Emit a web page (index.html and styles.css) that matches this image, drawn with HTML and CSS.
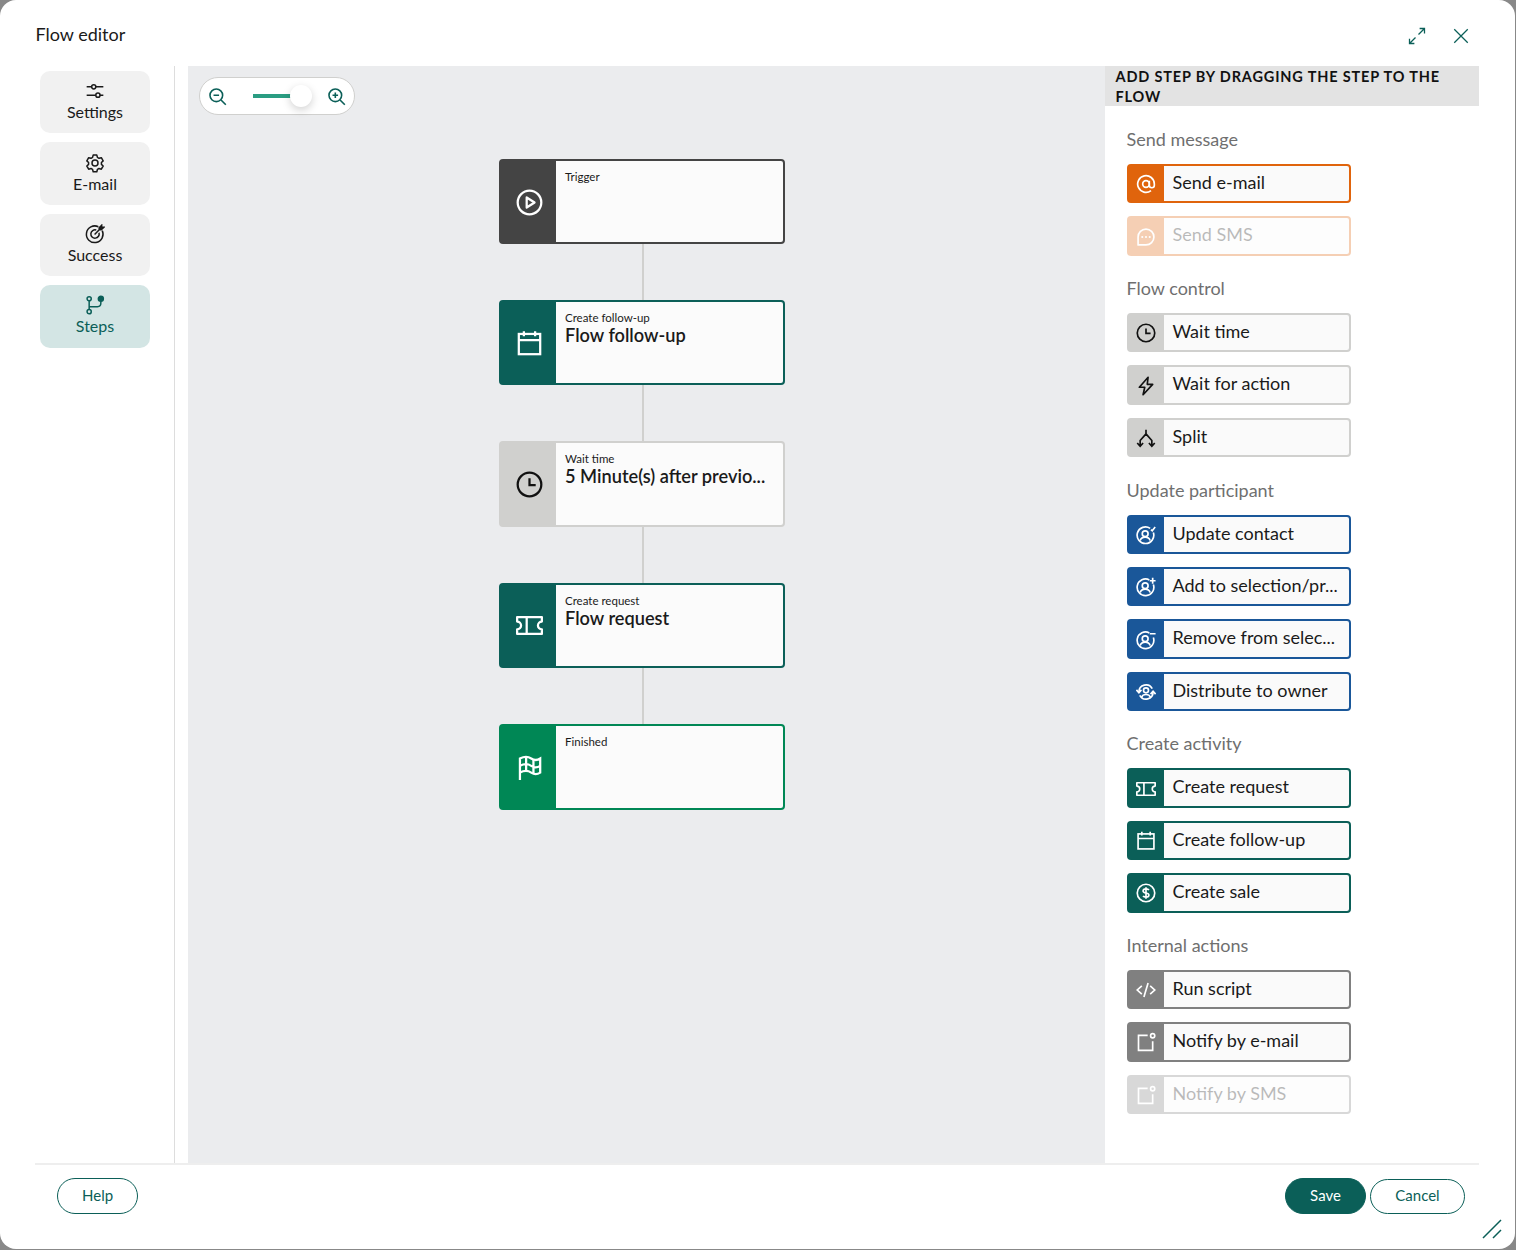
FILE: index.html
```html
<!DOCTYPE html>
<html lang="en">
<head>
  <meta charset="UTF-8" />
  <meta name="viewport" content="width=device-width, initial-scale=1.0"/>
  <title>Flow editor</title>
  <link rel="stylesheet" href="styles.css">
</head>
<body>
  <!-- icon sprite -->
  <svg class="sprite" xmlns="http://www.w3.org/2000/svg">
    <symbol id="i-sliders" viewBox="0 0 24 24"><path d="M2 7h6M13 7h9M2 17h11M18 17h4"/><circle cx="10.5" cy="7" r="2.5"/><circle cx="15.500" cy="17" r="2.500"/></symbol>
    <symbol id="i-gear" viewBox="0 0 24 24"><circle cx="12" cy="12" r="3.600"/><path d="M9.800 2.500h4.400l.7 2.800 1.900 1.100 2.800-.8 2.200 3.800-2.100 2v2.200l2.100 2-2.200 3.800-2.800-.8-1.900 1.100-.7 2.800H9.800l-.7-2.800-1.900-1.100-2.800.8-2.200-3.800 2.100-2v-2.200l-2.100-2 2.200-3.800 2.800.8 1.900-1.100z" stroke-linejoin="round"/></symbol>
    <symbol id="i-target" viewBox="0 0 24 24"><path d="M16 3.300A10 10 0 1 0 20.700 8"/><path d="M13.500 7.200A5 5 0 1 0 16.800 10.500"/><path d="M11.500 12.500 20 4M17 4.500V7h2.500L22.500 4H20V1.500z"/></symbol>
    <symbol id="i-branch" viewBox="0 0 24 24"><circle cx="5" cy="4.500" r="2.500"/><circle cx="5" cy="20" r="2.500"/><circle class="dot" cx="19" cy="4.500" r="3"/><path d="M5 7v10.500M5 14h10a4 4 0 0 0 4-4V7"/></symbol>
    <symbol id="i-zoom-out" viewBox="0 0 24 24"><circle cx="10.500" cy="10.500" r="8"/><path d="M16.500 16.500 22.500 22.500M7 10.500h7"/></symbol>
    <symbol id="i-zoom-in" viewBox="0 0 24 24"><circle cx="10.500" cy="10.500" r="8"/><path d="M16.500 16.500 22.500 22.500M7 10.500h7M10.500 7v7"/></symbol>
    <symbol id="i-play" viewBox="0 0 24 24"><circle cx="12" cy="12" r="10.500"/><path d="M9.500 7.500 16.500 12l-7 4.500z" stroke-linejoin="round"/></symbol>
    <symbol id="i-calendar" viewBox="0 0 24 24"><rect x="2.500" y="3.500" width="19" height="18"/><path d="M2.500 9h19M7 1V5.500M17 1V5.500"/></symbol>
    <symbol id="i-clock" viewBox="0 0 24 24"><circle cx="12" cy="12" r="10.500"/><path d="M12 6.500V12.500H17.500"/></symbol>
    <symbol id="i-ticket" viewBox="0 0 24 24"><path d="M1 4.500h22v4a3.500 3.500 0 0 0 0 7v4H1v-4a3.500 3.500 0 0 0 0-7zM9.500 4.500v15" stroke-linejoin="round"/></symbol>
    <symbol id="i-flag" viewBox="0 0 24 24"><path d="M3.500 23V4c4-2 7-2 10 0s5 2 8 0v12.500c-3 2-5 2-8 0s-6-2-10 0"/><path d="M9 2.800V15.200M15.500 4.800V17.300M3.500 10.500c4-2 7-2 10 0s5 2 8 0"/></symbol>
    <symbol id="i-at" viewBox="0 0 24 24"><circle cx="12" cy="12" r="4"/><path d="M16 8v5.500a3 3 0 0 0 6 0V12a10 10 0 1 0-4 8"/></symbol>
    <symbol id="i-chat" viewBox="0 0 24 24"><path d="M12 2.500a9.500 9.500 0 0 1 0 19H2.500V12A9.500 9.500 0 0 1 12 2.500z" stroke-linejoin="round"/><path d="M7.500 12h.01M12 12h.01M16.500 12h.01" stroke-linecap="round" stroke-width="2.500"/></symbol>
    <symbol id="i-bolt" viewBox="0 0 24 24"><path d="M14.500 1.500 4 13.500h6.500L8.500 22.500 20 10h-6.500z" stroke-linejoin="round"/></symbol>
    <symbol id="i-split" viewBox="0 0 24 24"><path d="M12 2v5M12 7 5 15v6M12 7l7 8v6M1.500 18 5 22l3.500-4M15.500 18l3.500 4 3.500-4"/></symbol>
    <symbol id="i-user-check" viewBox="0 0 24 24"><path d="M17 4A10 10 0 1 0 20.800 9"/><circle cx="11" cy="10.500" r="3.500"/><path d="M5 18.500c1-3 3.500-4 6-4s5 1 6 4M18 5.500 19.500 7 23 2.500"/></symbol>
    <symbol id="i-user-plus" viewBox="0 0 24 24"><path d="M16 3.500A10 10 0 1 0 20.800 9"/><circle cx="11" cy="10.500" r="3.500"/><path d="M5 18.500c1-3 3.500-4 6-4s5 1 6 4M20 1v7M16.500 4.500h7"/></symbol>
    <symbol id="i-user-minus" viewBox="0 0 24 24"><path d="M16 3.500A10 10 0 1 0 20.800 9"/><circle cx="11" cy="10.500" r="3.500"/><path d="M5 18.500c1-3 3.500-4 6-4s5 1 6 4M16.500 4.500h7"/></symbol>
    <symbol id="i-user-sync" viewBox="0 0 24 24"><path d="M3.500 12a8.500 8.500 0 0 1 16-4M20.500 12a8.500 8.500 0 0 1-16 4"/><circle cx="12" cy="10" r="3"/><path d="M6.500 18.500c1-2.500 3-3.500 5.500-3.500s4.500 1 5.500 3.500M.5 9.500l3 3.500 3-3.500M17.500 14.500l3-3.500 3 3.500"/></symbol>
    <symbol id="i-coin" viewBox="0 0 24 24"><circle cx="12" cy="12" r="10.500"/><path d="M15.500 8.500c-.5-1-1.800-1.500-3.500-1.500-2 0-3.500 1-3.500 2.500 0 3.500 7 1.500 7 5 0 1.500-1.500 2.500-3.500 2.500-1.700 0-3-.5-3.500-1.500M12 5v14"/></symbol>
    <symbol id="i-code" viewBox="0 0 24 24"><path d="M7 7 1.500 12 7 17M17 7l5.500 5-5.500 5M14.500 3.500 9.500 20.500"/></symbol>
    <symbol id="i-notify" viewBox="0 0 24 24"><path d="M14 4H3v18h17V11"/><circle cx="20" cy="4.500" r="2.500"/></symbol>
    <symbol id="i-expand" viewBox="0 0 24 24"><path d="M14 10 22 2M15.500 2H22V8.500M10 14 2 22M2 15.500V22H8.500"/></symbol>
    <symbol id="i-close" viewBox="0 0 24 24"><path d="M3 3 21 21M21 3 3 21"/></symbol>
  </svg>

  <div class="dialog">
    <header class="dialog-head">
      <h1 class="dialog-title">Flow editor</h1>
      <div class="head-actions">
        <svg class="icon head-icon"><use href="#i-expand"/></svg>
        <svg class="icon head-icon"><use href="#i-close"/></svg>
      </div>
    </header>

    <div class="dialog-body">
      <nav class="sidenav">
        <a class="nav-item"><svg class="icon"><use href="#i-sliders"/></svg>Settings</a>
        <a class="nav-item"><svg class="icon"><use href="#i-gear"/></svg>E-mail</a>
        <a class="nav-item"><svg class="icon"><use href="#i-target"/></svg>Success</a>
        <a class="nav-item active"><svg class="icon"><use href="#i-branch"/></svg>Steps</a>
      </nav>

      <main class="canvas">
        <div class="zoom-bar">
          <svg class="icon zoom-icon"><use href="#i-zoom-out"/></svg>
          <div class="zoom-track"><span class="zoom-fill"></span><span class="zoom-thumb"></span></div>
          <svg class="icon zoom-icon zoom-last"><use href="#i-zoom-in"/></svg>
        </div>

        <div class="flow">
          <div class="node dark">
            <div class="node-icon"><svg class="icon"><use href="#i-play"/></svg></div>
            <div class="node-text"><span class="node-label">Trigger</span></div>
          </div>
          <div class="connector"></div>
          <div class="node teal">
            <div class="node-icon"><svg class="icon"><use href="#i-calendar"/></svg></div>
            <div class="node-text"><span class="node-label">Create follow-up</span><span class="node-title">Flow follow-up</span></div>
          </div>
          <div class="connector"></div>
          <div class="node grey">
            <div class="node-icon"><svg class="icon"><use href="#i-clock"/></svg></div>
            <div class="node-text"><span class="node-label">Wait time</span><span class="node-title">5 Minute(s) after previo...</span></div>
          </div>
          <div class="connector"></div>
          <div class="node teal">
            <div class="node-icon"><svg class="icon"><use href="#i-ticket"/></svg></div>
            <div class="node-text"><span class="node-label">Create request</span><span class="node-title">Flow request</span></div>
          </div>
          <div class="connector"></div>
          <div class="node green">
            <div class="node-icon"><svg class="icon"><use href="#i-flag"/></svg></div>
            <div class="node-text"><span class="node-label">Finished</span></div>
          </div>
        </div>
      </main>

      <aside class="palette">
        <h2 class="palette-head">Add step by dragging the step to the flow</h2>
        <div class="palette-list">
          <section class="group">
            <h3 class="group-title">Send message</h3>
            <div class="step orange"><span class="step-icon"><svg class="icon"><use href="#i-at"/></svg></span><span class="step-name">Send e-mail</span></div>
            <div class="step orange disabled"><span class="step-icon"><svg class="icon"><use href="#i-chat"/></svg></span><span class="step-name">Send SMS</span></div>
          </section>
          <section class="group">
            <h3 class="group-title">Flow control</h3>
            <div class="step grey"><span class="step-icon"><svg class="icon"><use href="#i-clock"/></svg></span><span class="step-name">Wait time</span></div>
            <div class="step grey"><span class="step-icon"><svg class="icon"><use href="#i-bolt"/></svg></span><span class="step-name">Wait for action</span></div>
            <div class="step grey"><span class="step-icon"><svg class="icon"><use href="#i-split"/></svg></span><span class="step-name">Split</span></div>
          </section>
          <section class="group">
            <h3 class="group-title">Update participant</h3>
            <div class="step blue"><span class="step-icon"><svg class="icon"><use href="#i-user-check"/></svg></span><span class="step-name">Update contact</span></div>
            <div class="step blue"><span class="step-icon"><svg class="icon"><use href="#i-user-plus"/></svg></span><span class="step-name">Add to selection/pr...</span></div>
            <div class="step blue"><span class="step-icon"><svg class="icon"><use href="#i-user-minus"/></svg></span><span class="step-name">Remove from selec...</span></div>
            <div class="step blue"><span class="step-icon"><svg class="icon"><use href="#i-user-sync"/></svg></span><span class="step-name">Distribute to owner</span></div>
          </section>
          <section class="group">
            <h3 class="group-title">Create activity</h3>
            <div class="step teal"><span class="step-icon"><svg class="icon"><use href="#i-ticket"/></svg></span><span class="step-name">Create request</span></div>
            <div class="step teal"><span class="step-icon"><svg class="icon"><use href="#i-calendar"/></svg></span><span class="step-name">Create follow-up</span></div>
            <div class="step teal"><span class="step-icon"><svg class="icon"><use href="#i-coin"/></svg></span><span class="step-name">Create sale</span></div>
          </section>
          <section class="group">
            <h3 class="group-title">Internal actions</h3>
            <div class="step slate"><span class="step-icon"><svg class="icon"><use href="#i-code"/></svg></span><span class="step-name">Run script</span></div>
            <div class="step slate"><span class="step-icon"><svg class="icon"><use href="#i-notify"/></svg></span><span class="step-name">Notify by e-mail</span></div>
            <div class="step slate disabled"><span class="step-icon"><svg class="icon"><use href="#i-notify"/></svg></span><span class="step-name">Notify by SMS</span></div>
          </section>
        </div>
      </aside>
    </div>

    <footer class="dialog-foot">
      <button class="btn">Help</button>
      <div class="foot-right">
        <button class="btn primary">Save</button>
        <button class="btn cancel">Cancel</button>
      </div>
      <svg class="resize-handle" viewBox="0 0 20 20"><path d="M1 19 19 1M11 19 19 11"/></svg>
    </footer>
  </div>
</body>
</html>
```

FILE: styles.css
```css
* { box-sizing: border-box; }
html, body { margin: 0; height: 100%; }
body { background: #888; font-family: "Lato", "Liberation Sans", sans-serif; color: #1a1a1a; overflow: hidden; }
.sprite { display: none; }
.icon { width: 20px; height: 20px; fill: none; stroke: currentColor; stroke-width: 2; display: block; flex: none; }
.icon .dot, .dot { fill: currentColor; }

.dialog { width: 1515px; height: 1249px; background: #fff; border-radius: 16px; display: flex; flex-direction: column; position: relative; }

.dialog-head { height: 66px; flex: none; display: flex; align-items: center; justify-content: space-between; padding: 6px 45px 0 35.500px; }
.dialog-title { font-size: 18px; font-weight: 400; margin: 0 0 4px; }
.head-actions { display: flex; gap: 26px; color: #0b5f58; }
.head-icon { width: 18px; height: 18px; stroke-width: 1.700; }

.dialog-body { flex: 1; min-height: 0; display: flex; padding-right: 36px; }

.sidenav { width: 175px; flex: none; border-right: 1px solid #ddd; padding: 5px 24px 0 40px; display: flex; flex-direction: column; gap: 9px; }
.nav-item { height: 62.400px; background: #f1f1f1; border-radius: 10px; display: flex; flex-direction: column; align-items: center; padding-top: 10.300px; font-size: 16px; line-height: 22px; }
.nav-item .icon { stroke-width: 1.800; height: 20px; }
.nav-item.active { background: #d3e5e4; color: #0b5f58; }

.canvas { flex: 1; min-width: 0; margin-left: 13px; background: #ebecee; position: relative; }
.zoom-bar { position: absolute; left: 11px; top: 11px; width: 156px; height: 38px; background: #fff; border: 1px solid #d0d0ce; border-radius: 19px; display: flex; align-items: center; padding: 0 8px 0 8px; }
.zoom-icon { color: #0b5f58; stroke-width: 2; width: 19px; height: 19px; }
.zoom-last { margin-left: auto; }
.zoom-track { width: 59px; height: 4px; margin-left: 26px; position: relative; }
.zoom-fill { display: block; height: 4px; width: 38px; background: #2a9d82; }
.zoom-thumb { position: absolute; left: 37px; top: -9px; width: 22px; height: 22px; border-radius: 50%; background: #fff; box-shadow: 0 3px 8px rgba(0,0,0,.18); }

.flow { padding: 93px 0 0 311px; display: flex; flex-direction: column; }
.connector { width: 2px; height: 55.900px; flex: none; margin-left: 143px; background: #d0d0ce; }
.node { width: 286px; height: 85.300px; flex: none; display: flex; border: 2px solid var(--accent); border-radius: 4px; background: #fbfbfb; }
.node.dark { --accent: #444; }
.node.teal { --accent: #0b5f58; }
.node.grey { --accent: #d0d0ce; }
.node.green { --accent: #008755; height: 86px; }
.node-icon { width: 55px; flex: none; background: var(--accent); color: #fff; display: flex; align-items: center; justify-content: center; padding-left: 1px; }
.node.grey .node-icon { color: #111; }
.node-icon .icon { width: 27px; height: 27px; stroke-width: 2; margin-top: 1px; }
.node-text { flex: 1; min-width: 0; padding: 8px 0 0 9px; display: flex; flex-direction: column; }
.node-label { font-size: 11.500px; line-height: 15px; }
.node-title { font-size: 18.200px; font-weight: 600; line-height: 21px; white-space: nowrap; }

.palette { width: 374px; flex: none; display: flex; flex-direction: column; }
.palette-head { height: 40px; flex: none; margin: 0; background: #e3e3e3; padding: 1px 20px 0 10.500px; font-size: 14.500px; line-height: 20px; font-weight: 700; letter-spacing: .84px; text-transform: uppercase; color: #111; }
.palette-list { padding: 22px 0 0 22px; }
.group { margin-bottom: 21.300px; }
.group-title { font-size: 18px; font-weight: 400; line-height: 23px; height: 23px; margin: 0 0 13px -.5px; color: #6f6f6f; }
.step { width: 224px; height: 39.400px; margin-bottom: 13px; display: flex; border: 2px solid var(--accent); border-radius: 4px; background: #fafafa; }
.group .step:last-child { margin-bottom: 0; }
.step.orange { --accent: #e0640c; }
.step.grey { --accent: #d0d0ce; }
.step.blue { --accent: #1a5799; }
.step.teal { --accent: #0b5f58; }
.step.slate { --accent: #808080; }
.step.disabled { opacity: .3; }
.step-icon { width: 35px; flex: none; background: var(--accent); color: #fff; display: flex; align-items: center; justify-content: center; padding: 1px 2px 0 0; }
.step.grey .step-icon { color: #111; }
.step-icon .icon { stroke-width: 2; }
.step-name { flex: 1; min-width: 0; padding-left: 8.500px; font-size: 18px; line-height: 32px; white-space: nowrap; }

.dialog-foot { height: 86px; flex: none; margin: 0 36px 0 35px; border-top: 2px solid #eee; display: flex; justify-content: space-between; padding: 13px 14px 0 22px; align-items: flex-start; position: relative; }
.foot-right { display: flex; gap: 4px; }
.btn { height: 36px; min-width: 81px; padding: 0 24px 2px; background: #fff; border: 1px solid #0b5f58; border-radius: 18px; font: 400 15px "Lato", sans-serif; color: #0b5f58; }
.btn.primary { background: #0b5f58; color: #fff; }
.btn.cancel { width: 95px; height: 35px; margin-top: 1px; padding-bottom: 3px; }
.resize-handle { position: absolute; right: -23px; top: 54px; width: 20px; height: 20px; stroke: #0b5f58; stroke-width: 1.500; fill: none; }
```
